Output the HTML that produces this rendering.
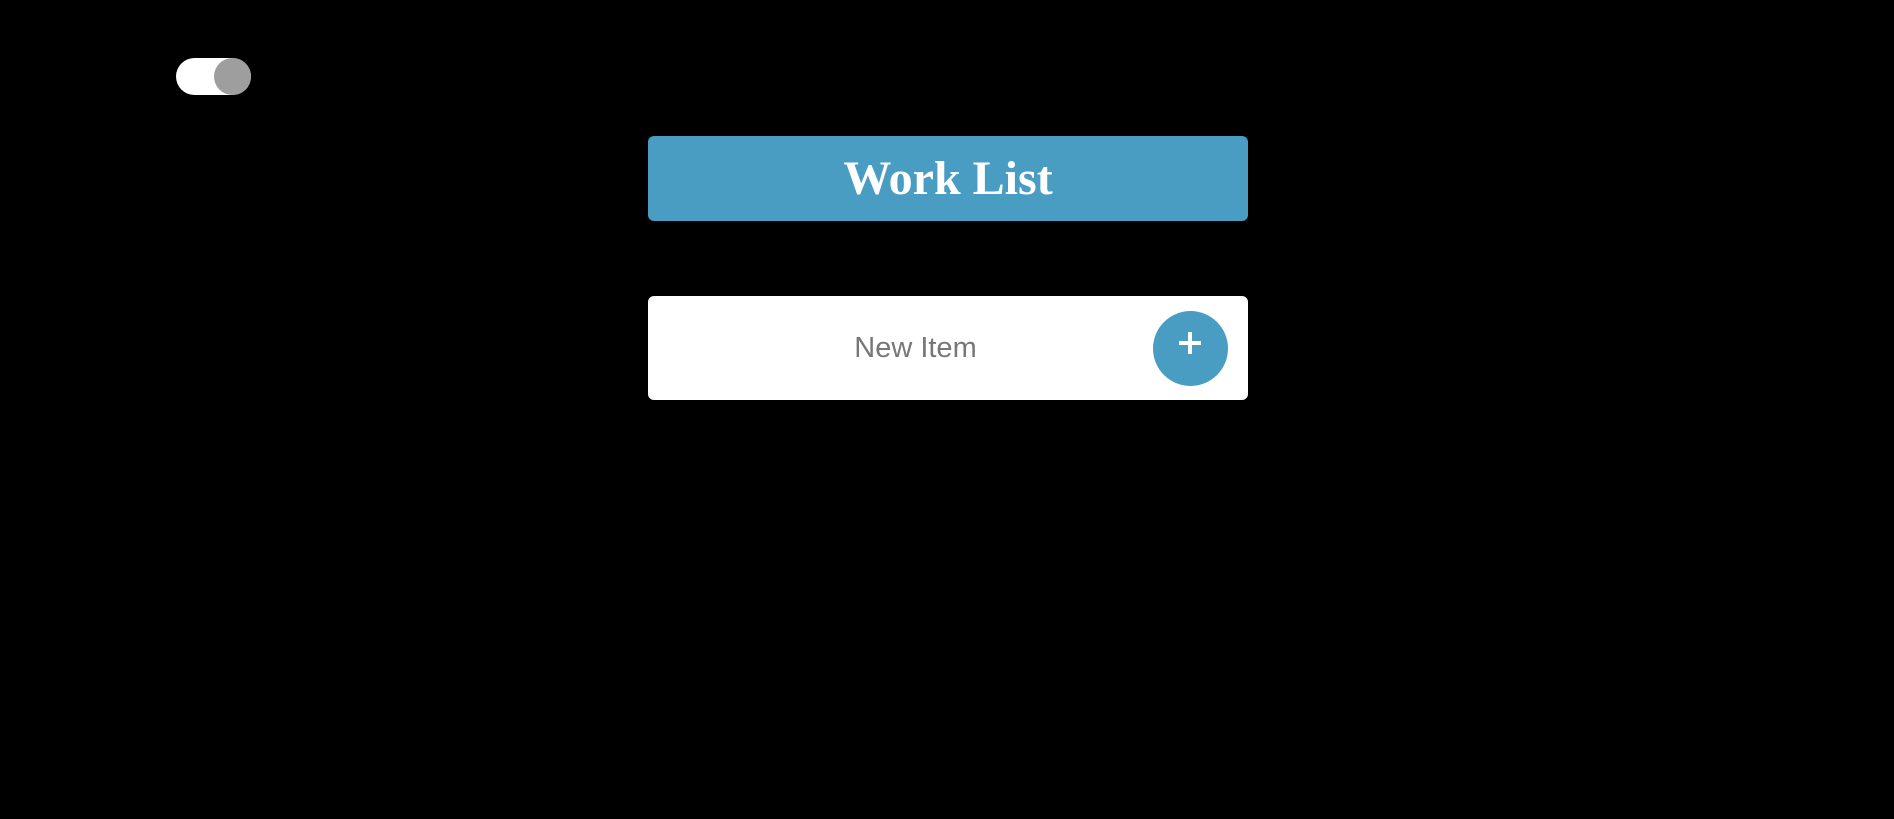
<!DOCTYPE html>
<html><head><style>
body{margin:0;width:1894px;height:819px;background:#000;position:relative;overflow:hidden;font-family:"Liberation Sans",sans-serif}
.tog{position:absolute;left:176px;top:58px;width:75px;height:37px;border-radius:19px;background:#fff}
.knob{position:absolute;right:0;top:0;width:37px;height:37px;border-radius:50%;background:#9e9e9e}
.hdr{position:absolute;left:648px;top:136px;width:600px;height:85px;background:#4a9dc2;border-radius:6px;color:#fff;font-family:"Liberation Serif",serif;font-weight:bold;font-size:48px;text-align:center;line-height:85px}
.inp{position:absolute;left:648px;top:296px;width:600px;height:104px;background:#fff;border-radius:6px}
.txt{position:absolute;left:0;width:535px;text-align:center;top:0;line-height:104px;font-size:29px;color:#777}
.btn{position:absolute;left:505px;top:15px;width:75px;height:75px;border-radius:50%;background:#4a9dc2}
.h{position:absolute;left:26px;top:30px;width:22px;height:4px;background:#fff}
.v{position:absolute;left:35px;top:21px;width:4px;height:22px;background:#fff}
</style></head><body>
<div class="tog"><div class="knob"></div></div>
<div class="hdr">Work List</div>
<div class="inp"><div class="txt">New Item</div><div class="btn"><div class="h"></div><div class="v"></div></div></div>
</body></html>
